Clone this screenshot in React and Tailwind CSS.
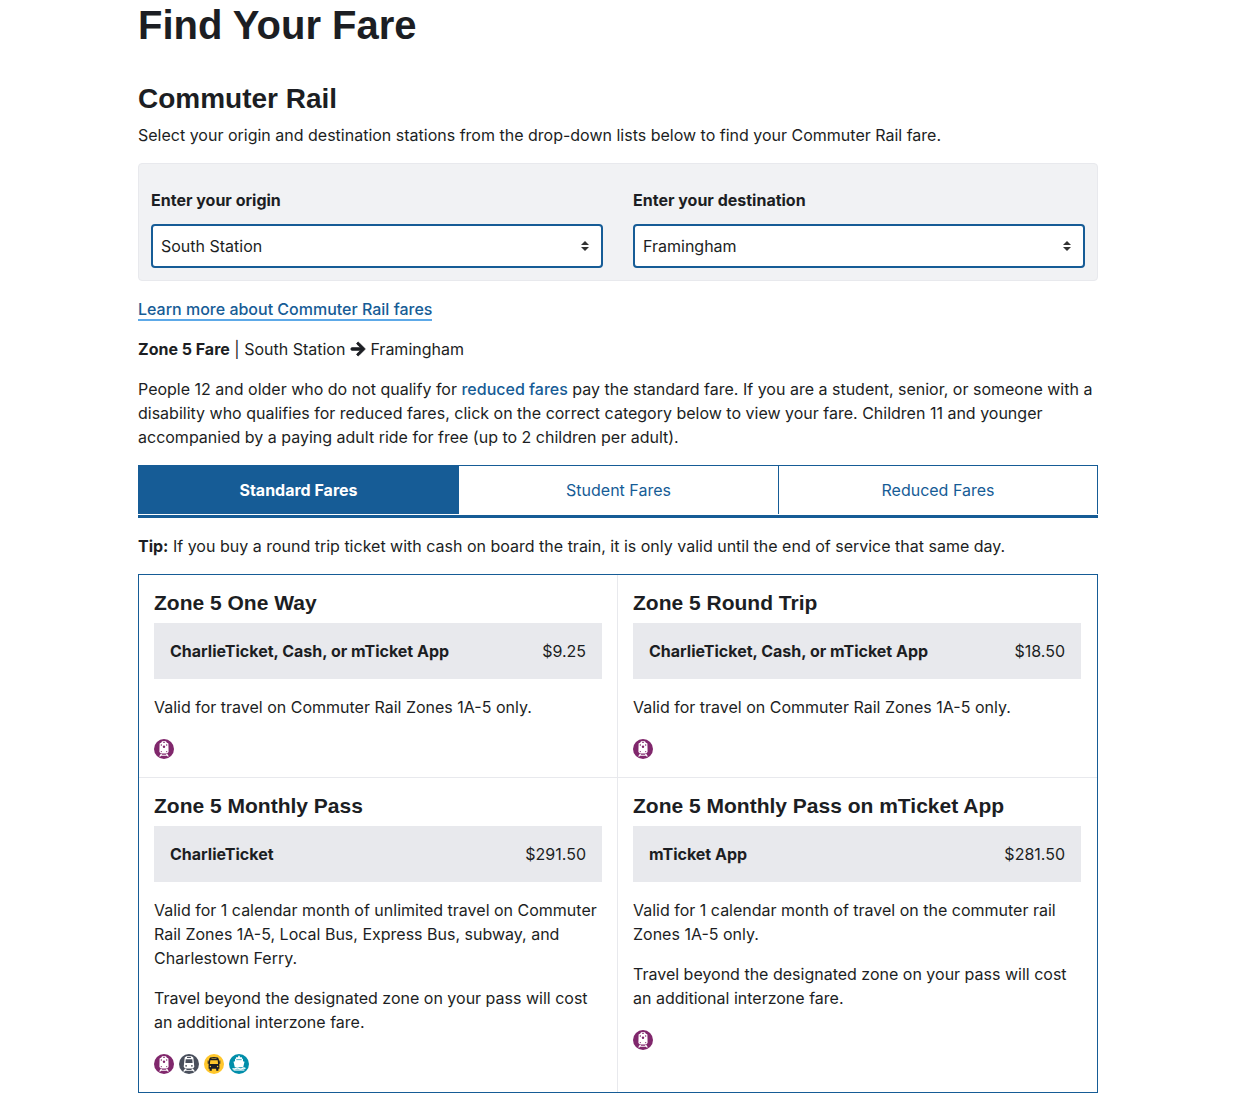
import React, { useState } from "react";
import { FaArrowRight } from "react-icons/fa";

const stations = ["South Station", "Back Bay", "Framingham", "Worcester"];

function CommuterRail() {
  return (
    <svg viewBox="0 0 20 20" className="size-5" role="img" aria-label="Commuter Rail">
      <circle cx="10" cy="10" r="10" fill="#80276c" />
      <path fill="#fff" d="M8 2.200h4l.6 1.200 1.800 1 .2 8.600-1.500 1.500H6.900L5.400 13l.2-8.600 1.800-1zM6.600 15h1.400l-.3.800h4.600l-.3-.8h1.400l1.500 2.500h-1.500l-.4-.8H7l-.4.800H5.100z" />
      <path fill="#80276c" d="M9 3.300h2v.8H9zM6.800 5.200h1v1.500h-1zM12.200 5.200h1v1.500h-1z" />
      <circle cx="10" cy="7.700" r="1.200" fill="#80276c" />
      <circle cx="7.300" cy="12.600" r=".6" fill="#80276c" />
      <circle cx="12.700" cy="12.600" r=".6" fill="#80276c" />
    </svg>
  );
}

function Subway() {
  return (
    <svg viewBox="0 0 20 20" className="size-5" role="img" aria-label="Subway">
      <circle cx="10" cy="10" r="10" fill="#494f5c" />
      <path fill="#fff" d="M7.300 2.200h5.400l1.600 1.300 1 9.200-1.300 1.800H6l-1.300-1.800 1-9.200zM5.800 15h1.800l-.4.900h5.600l-.4-.9h1.800l1.800 2.500h-1.800l-.6-.7H6.400l-.6.700H4z" />
      <path fill="#494f5c" d="M8 2.900h4v1H8zM6.700 5.200h6.600l.3 3.700H6.400z" />
      <circle cx="7.100" cy="11.800" r=".9" fill="#494f5c" />
      <circle cx="12.900" cy="11.800" r=".9" fill="#494f5c" />
    </svg>
  );
}

function Bus() {
  return (
    <svg viewBox="0 0 20 20" className="size-5" role="img" aria-label="Bus">
      <circle cx="10" cy="10" r="10" fill="#ffc72c" />
      <path fill="#1c1e23" d="M6.200 3.600Q10 2.600 13.800 3.600l1 1.400.6 6.300v3.500h-1v1.900h-2.200v-1.900H7.800v1.900H5.600v-1.900h-1v-3.500L5.200 5zM3.700 6.500h1v3.300h-1zM15.300 6.500h1v3.300h-1z" />
      <path fill="#ffc72c" d="M7.500 4.400h5v.5h-5zM6.300 6.200h7.400l.4 3.800H5.900z" />
      <circle cx="6.400" cy="12.500" r=".7" fill="#ffc72c" />
      <circle cx="13.600" cy="12.500" r=".7" fill="#ffc72c" />
    </svg>
  );
}

function Ferry() {
  return (
    <svg viewBox="0 0 20 20" className="size-5" role="img" aria-label="Ferry">
      <circle cx="10" cy="10" r="10" fill="#008eaa" />
      <path fill="#fff" d="M9.200 1.800h1.600v1.500h2.200v1.500h1v2.400l1.500.6-1.300 5.400H5.800L4.500 7.800 6 7.200V4.800h1V3.300h2.200z" />
      <path fill="#008eaa" d="M7.300 5.400h5.400v.7H7.300z" />
      <path d="M3.500 14.500q1.600 1 3.200 0t3.300 0q1.600 1 3.200 0t3.300 0" fill="none" stroke="#fff" strokeWidth="1.400" />
      <path d="M4.600 16h10.800" fill="none" stroke="#fff" strokeWidth="1.200" />
    </svg>
  );
}

function StationSelect({ id, label, initial }) {
  const [value, setValue] = useState(initial);
  return (
    <div>
      <label htmlFor={id} className="mb-3 block font-bold">
        {label}
      </label>
      <div className="relative">
        <select
          id={id}
          value={value}
          onChange={(e) => setValue(e.target.value)}
          className="h-11 w-full appearance-none rounded border-2 border-[#165c96] bg-white px-2"
        >
          {stations.map((s) => (
            <option key={s}>{s}</option>
          ))}
        </select>
        <svg viewBox="0 0 8 10" className="pointer-events-none absolute top-1/2 right-3.5 h-2.5 w-2 -translate-y-1/2" aria-hidden="true">
          <path fill="#333" d="M4 0l4 4H0zM4 10L0 6h8z" />
        </svg>
      </div>
    </div>
  );
}

const fares = [
  {
    title: "Zone 5 One Way",
    media: "CharlieTicket, Cash, or mTicket App",
    price: "$9.25",
    text: ["Valid for travel on Commuter Rail Zones 1A-5 only."],
    modes: [CommuterRail],
  },
  {
    title: "Zone 5 Round Trip",
    media: "CharlieTicket, Cash, or mTicket App",
    price: "$18.50",
    text: ["Valid for travel on Commuter Rail Zones 1A-5 only."],
    modes: [CommuterRail],
  },
  {
    title: "Zone 5 Monthly Pass",
    media: "CharlieTicket",
    price: "$291.50",
    text: [
      "Valid for 1 calendar month of unlimited travel on Commuter Rail Zones 1A-5, Local Bus, Express Bus, subway, and Charlestown Ferry.",
      "Travel beyond the designated zone on your pass will cost an additional interzone fare.",
    ],
    modes: [CommuterRail, Subway, Bus, Ferry],
  },
  {
    title: "Zone 5 Monthly Pass on mTicket App",
    media: "mTicket App",
    price: "$281.50",
    text: [
      "Valid for 1 calendar month of travel on the commuter rail Zones 1A-5 only.",
      "Travel beyond the designated zone on your pass will cost an additional interzone fare.",
    ],
    modes: [CommuterRail],
  },
];

const heading = "font-['Liberation_Sans',sans-serif] font-bold";

function FareCard({ fare }) {
  return (
    <article className="border-[#e8e9ed] px-[15px] pt-4 pb-[18px] not-nth-last-[-n+2]:border-b odd:border-r even:pr-4">
      <h3 className={`${heading} mb-2 text-[21px] leading-6`}>{fare.title}</h3>
      <div className="mb-4 flex justify-between bg-[#e8e9ed] p-4">
        <span className="font-bold">{fare.media}</span>
        <span>{fare.price}</span>
      </div>
      {fare.text.map((t) => (
        <p key={t} className="mb-4">
          {t}
        </p>
      ))}
      <div className="mt-5 flex gap-[5px]">
        {fare.modes.map((Mode, i) => (
          <Mode key={i} />
        ))}
      </div>
    </article>
  );
}

const tabs = ["Standard Fares", "Student Fares", "Reduced Fares"];

export default function App() {
  const [active, setActive] = useState(0);
  return (
    <main className="mx-auto max-w-[960px] pb-4 font-['Inter',sans-serif] text-base text-[#1c1e23]">
      <h1 className={`${heading} text-[40px] leading-[50px]`}>Find Your Fare</h1>
      <h2 className={`${heading} mt-[33px] mb-2 text-[28px] leading-8`}>Commuter Rail</h2>
      <p className="mb-4">
        Select your origin and destination stations from the drop-down lists below to find your Commuter Rail fare.
      </p>
      <form className="mb-4 grid grid-cols-2 gap-[30px] rounded border border-[#e8e9ed] bg-[#f1f2f4] px-3 pt-6 pb-3">
        <StationSelect id="origin" label="Enter your origin" initial="South Station" />
        <StationSelect id="destination" label="Enter your destination" initial="Framingham" />
      </form>
      <p className="mb-4">
        <a href="#fares" className="border-b-2 border-[#5da9e8] font-medium text-[#165c96]">
          Learn more about Commuter Rail fares
        </a>
      </p>
      <p className="mb-4">
        <strong>Zone 5 Fare</strong> | South Station{" "}
        <FaArrowRight className="inline size-4 stroke-current stroke-[30] align-[-2px]" /> Framingham
      </p>
      <p className="mb-4">
        People 12 and older who do not qualify for{" "}
        <a href="#reduced" className="font-medium text-[#165c96]">
          reduced fares
        </a>{" "}
        pay the standard fare. If you are a student, senior, or someone with a disability who qualifies for reduced fares,
        click on the correct category below to view your fare. Children 11 and younger accompanied by a paying adult ride
        for free (up to 2 children per adult).
      </p>
      <div role="tablist" className="mb-4 grid grid-cols-3 border-b-3 border-[#165c96] pb-px">
        {tabs.map((t, i) => (
          <button
            key={t}
            type="button"
            role="tab"
            aria-selected={i === active}
            onClick={() => setActive(i)}
            className="border-t border-l border-[#165c96] py-3 text-[#165c96] last:border-r aria-selected:bg-[#165c96] aria-selected:font-bold aria-selected:text-white"
          >
            {t}
          </button>
        ))}
      </div>
      <p className="mb-4">
        <strong>Tip:</strong> If you buy a round trip ticket with cash on board the train, it is only valid until the end of
        service that same day.
      </p>
      <section className="grid grid-cols-2 border border-[#165c96]">
        {fares.map((f) => (
          <FareCard key={f.title} fare={f} />
        ))}
      </section>
    </main>
  );
}
